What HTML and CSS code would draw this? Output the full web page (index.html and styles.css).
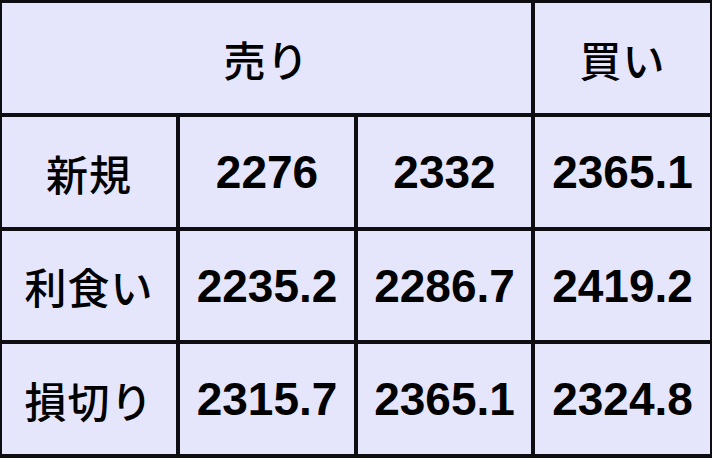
FILE: index.html
```html
<!DOCTYPE html>
<html lang="ja">
<head>
<meta charset="utf-8">
<link rel="stylesheet" href="styles.css">
</head>
<body>
<div class="board">
  <div class="cell head span3">売り</div>
  <div class="cell head">買い</div>
  <div class="cell label">新規</div>
  <div class="cell num">2276</div>
  <div class="cell num">2332</div>
  <div class="cell num">2365.1</div>
  <div class="cell label">利食い</div>
  <div class="cell num">2235.2</div>
  <div class="cell num">2286.7</div>
  <div class="cell num">2419.2</div>
  <div class="cell label">損切り</div>
  <div class="cell num">2315.7</div>
  <div class="cell num">2365.1</div>
  <div class="cell num">2324.8</div>
</div>
</body>
</html>
```
FILE: styles.css
```css
html, body {
  margin: 0;
  padding: 0;
  background: #ffffff;
}
.board {
  box-sizing: border-box;
  width: 712px;
  height: 458px;
  background: #0e0e12;
  padding: 3px 2px 4px 2px;
  display: grid;
  grid-template-columns: 174px 174px 173px 175px;
  grid-template-rows: 110px 110px 109px 110px;
  gap: 4px;
}
.cell {
  background: #e5e5fc;
  display: flex;
  align-items: center;
  justify-content: center;
  color: #000;
}
.span3 {
  grid-column: span 3;
}
.head, .label {
  font-family: "Noto Sans CJK JP", sans-serif;
  font-size: 42px;
  font-weight: 500;
  letter-spacing: 1px;
}
.num {
  font-family: "Liberation Sans", Arial, sans-serif;
  font-size: 46px;
  font-weight: bold;
}
```
